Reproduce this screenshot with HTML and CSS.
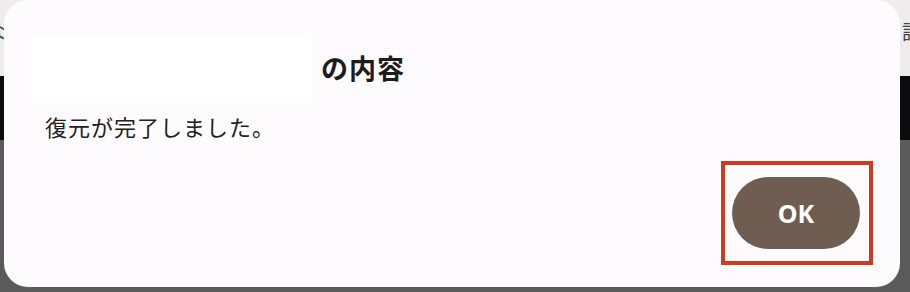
FILE: index.html
```html
<!DOCTYPE html>
<html lang="ja">
<head>
<meta charset="utf-8">
<link rel="stylesheet" href="styles.css">
</head>
<body>
<div class="page">
  <div class="topbar"><span class="frag-left">な</span><span class="frag-right">設</span></div>
  <div class="band"></div>
  <div class="rest"></div>
</div>
<div class="dialog" role="dialog">
  <div class="title-row">
    <div class="masked"></div>
    <h2 class="title">の内容</h2>
  </div>
  <p class="message">復元が完了しました。</p>
  <div class="actions">
    <div class="highlight">
      <button class="ok">OK</button>
    </div>
  </div>
</div>
</body>
</html>
```
FILE: styles.css
```css
html, body {
  margin: 0;
  padding: 0;
}
body {
  width: 910px;
  height: 292px;
  overflow: hidden;
  position: relative;
  font-family: "Noto Sans CJK JP", "Noto Sans", sans-serif;
}
.page {
  display: flex;
  flex-direction: column;
  height: 292px;
}
.topbar {
  height: 76px;
  background: #eeedeb;
  display: flex;
  justify-content: space-between;
  align-items: center;
  padding-bottom: 14px;
  box-sizing: border-box;
  color: #444;
  font-size: 20px;
  overflow: hidden;
}
.frag-left { margin-left: -14px; }
.frag-right { margin-right: -12px; }
.band {
  height: 64px;
  background: #0c0c0e;
}
.rest {
  flex: 1;
  background: #5a5a5a;
}
.dialog {
  position: absolute;
  left: 4px;
  top: 0;
  width: 896px;
  height: 287px;
  background: #fefbfe;
  border-radius: 24px;
  box-sizing: border-box;
  padding-top: 34px;
  display: flex;
  flex-direction: column;
}
.title-row {
  display: flex;
  align-items: center;
  height: 64px;
  padding-left: 26px;
}
.masked {
  width: 283px;
  height: 64px;
  background: #ffffff;
}
.title {
  margin: 0 0 0 8px;
  font-size: 27px;
  font-weight: 700;
  color: #1d1b1d;
  letter-spacing: 1px;
  line-height: 1;
  padding-top: 2px;
}
.message {
  margin: 13px 0 0 41px;
  font-size: 22px;
  line-height: 30px;
  letter-spacing: 1px;
  color: #222022;
}
.actions {
  display: flex;
  justify-content: flex-end;
  padding-right: 27px;
  margin-top: 20px;
}
.highlight {
  width: 152px;
  height: 104px;
  box-sizing: border-box;
  border: 4px solid #d03a21;
  display: flex;
  align-items: center;
  justify-content: center;
  padding-right: 2px;
}
.ok {
  width: 128px;
  height: 72px;
  border: none;
  border-radius: 36px;
  background: #6e5d50;
  color: #ffffff;
  font-family: "Noto Sans", "Noto Sans CJK JP", sans-serif;
  font-size: 25px;
  font-weight: 700;
  padding: 0;
  cursor: pointer;
}
```
